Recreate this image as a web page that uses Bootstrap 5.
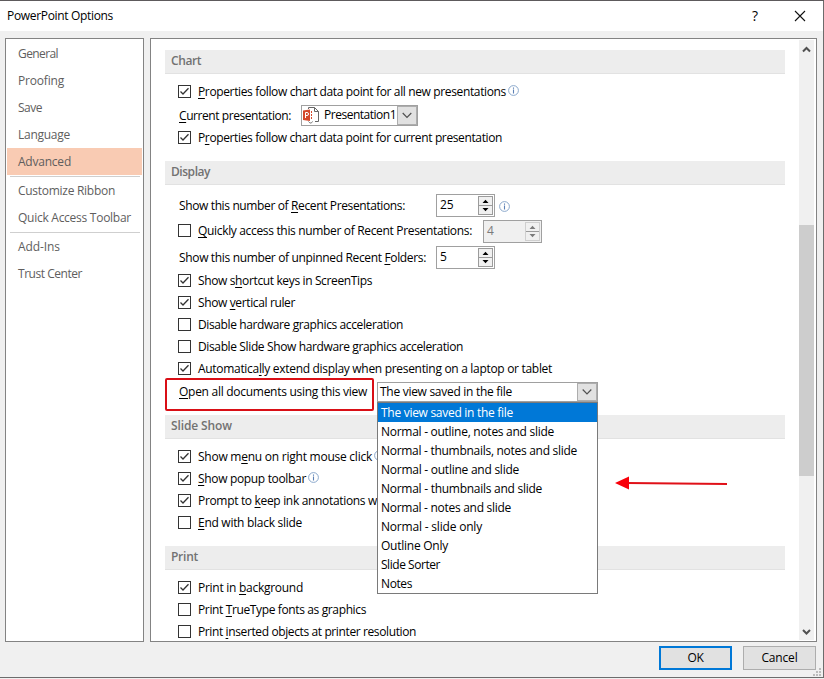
<!DOCTYPE html>
<html lang="en">
<head>
<meta charset="utf-8">
<meta name="viewport" content="width=device-width, initial-scale=1">
<title>PowerPoint Options</title>
<link href="https://cdn.jsdelivr.net/npm/bootstrap@5.3.0/dist/css/bootstrap.min.css" rel="stylesheet">
<style>
body{font:12px/18px "Open Sans","Noto Sans",sans-serif;color:#000;background:#f0f0f0;overflow:hidden}
.dialog{width:824px;height:679px;border-top:1px solid #5d5a5c;background:#f0f0f0}
.dialog-inner{height:677px;border-right:1px solid #6c6c6c;border-bottom:1px solid #6c6c6c}
.titlebar{height:30px;background:#fff;padding:0 17px 0 7px}
.help{font-size:14px;margin-right:35px;position:relative;left:-1px}
.panes{padding:7px 6px 0 5px;gap:6px}
.side{width:139px;height:604px;border:1px solid #838383;background:#fff;padding:1px}
.side a{height:27px;padding:5px 0 0 11px;color:#605e5e;text-decoration:none;display:block;white-space:nowrap}
.side a.current{background:#f9cbb3}
.side .rule{height:1px;margin:1px 2px 0 3px;background:#cfcfcf}
.main{width:667px;height:604px;border:1px solid #838383;background:#fff;overflow:hidden;padding:1px 2px 1px 14px}
.opts{width:620px;padding-top:10px}
.sect{height:24px;background:#ededed;border-bottom:1px solid #e2e2e2;color:#727272;font-weight:600;padding:2px 0 0 6px}
.sect.gap-top{margin-top:12px}
.line{height:22px;padding-left:13px;white-space:nowrap}
.line.first{margin-top:7px}
.line.short{height:21px}
.line.pick{height:25px}
.line.num{height:26px}
.line.num.lead-in{margin-top:9px}
.line.num.end{height:24px}
.line.view{height:35px}
.box{width:13px;height:13px;border:1px solid #333;background:#fff;margin:4px 7px 0 0;flex:none}
.box svg{display:block}
.line .txt{margin-top:2px;flex:none}
.line .bare{margin:3px 0 0 1px}
.pick .bare{margin-top:5px}
u{text-underline-offset:2px;text-decoration-thickness:1px}
.info{width:11px;height:11px;margin:4px 0 0 2px;flex:none}
.num .info{margin:7px 0 0 4px}
.spin{width:59px;height:23px;border:1px solid #a0a0a0;background:#fff;padding:1px 1px 1px 3px;line-height:17px;flex:none}
.spin.m31{margin-left:31px}
.spin.m11{margin-left:11px}
.spin.m10{margin-left:10px}
.spin.off{background:#f0f0f0;color:#7b7b7b}
.spin .ar{width:15px;height:19px;border:1px solid #9b9b9b;background:#f0f0f0}
.spin.off .ar{border-color:#cfcfcf}
.combo{border:1px solid #a0a0a0;background:#fff;height:20px;width:221px;margin-top:2px;padding-left:2px;flex:none}
.combo.pres{width:117px;height:21px;margin:3px 0 0 10px;padding-left:0}
.combo.pres .nm{margin-left:3px}
.drop{width:20px;border:1px solid #adadad;background:#e1e1e1;flex:none}
.drop svg{display:block}
.view-wrap{height:33px;width:209px;border:2px solid #d90f16;border-radius:2px;margin:-2px 3px 0 -13px;padding:3px 0 0 12px}
.views{position:absolute;left:0;top:20px;width:221px;border:1px solid #7a7a7a;background:#fff;z-index:3;margin:-1px 0 0 -1px}
.views div{height:19px;padding-left:3px;line-height:20px}
.views .on{background:#0078d7;color:#fff}
.sbar{width:15px;height:600px;background:#f0f0f0}
.thumb{height:251px;background:#cdcdcd}
.arrow{position:absolute;left:615px;top:475px;z-index:4}
.foot{padding:4px 7px 0 0;gap:11px}
.pb{width:73px;height:24px;border:1px solid #adadad;border-radius:0;background:#e1e1e1;font-size:12px;line-height:20px;padding:0;color:#000}
.pb.def{border:2px solid #0078d7;line-height:18px}
.grip{position:absolute;left:813px;top:667px}
[data-w]{white-space:nowrap}
</style>
<script src="https://cdn.jsdelivr.net/npm/bootstrap@5.3.0/dist/js/bootstrap.bundle.min.js"></script>
</head>
<body>
<svg width="0" height="0" class="position-absolute">
<symbol id="chk" viewBox="0 0 11 11"><path d="M1.500 5.500 4 8 9.500 2.300" fill="none" stroke="#333" stroke-width="1.300"/></symbol>
<symbol id="inf" viewBox="0 0 11 11"><circle cx="5.500" cy="5.500" r="4.900" fill="#fff" stroke="#7f9fc6" stroke-width=".9"/><path d="M5.500 2.400v1.300M5.500 4.600v4" stroke="#5b80b5" stroke-width="1.100"/></symbol>
<symbol id="ud" viewBox="0 0 13 17"><path d="M0 8.500h13" stroke="#9b9b9b"/><path d="M3.500 6 6.500 2.700 9.500 6zM3.500 11 6.500 14.300 9.500 11z" fill="currentColor"/></symbol>
<symbol id="dn" viewBox="0 0 18 16"><path d="M4.700 5.500 9 9.800 13.300 5.500" fill="none" stroke="#505050" stroke-width="1.200"/></symbol>
</svg>
<div class="dialog position-relative">
<div class="dialog-inner">
<header class="titlebar d-flex align-items-center">
<span data-w="106">PowerPoint Options</span>
<span class="help ms-auto">?</span>
<svg width="12" height="12"><path d="M1 1 11 11M11 1 1 11" stroke="#111" stroke-width="1.100"/></svg>
</header>
<div class="panes d-flex">
<nav class="side">
<a href="#"><span data-w="40">General</span></a>
<a href="#"><span data-w="46">Proofing</span></a>
<a href="#"><span data-w="24">Save</span></a>
<a href="#"><span data-w="52">Language</span></a>
<a href="#" class="current"><span data-w="53">Advanced</span></a>
<div class="rule"></div>
<a href="#"><span data-w="97">Customize Ribbon</span></a>
<a href="#"><span data-w="113">Quick Access Toolbar</span></a>
<div class="rule"></div>
<a href="#"><span data-w="42">Add-Ins</span></a>
<a href="#"><span data-w="64">Trust Center</span></a>
</nav>
<main class="main d-flex justify-content-between">
<div class="opts">
<div class="sect"><span data-w="30">Chart</span></div>
<div class="line first short d-flex"><span class="box"><svg width="11" height="11"><use href="#chk"/></svg></span><span class="txt" data-w="308"><u>P</u>roperties follow chart data point for all new presentations</span><svg class="info"><use href="#inf"/></svg></div>
<div class="line pick d-flex"><span class="txt bare" data-w="112"><u>C</u>urrent presentation:</span>
<div class="combo pres d-flex">
<svg width="19" height="19" class="flex-shrink-0"><path d="M6.500 3V1.500H12.500L16.500 5.500V15.500H13M12.500 1.500V5.500H16.500M6.500 15.500C8 17.500 9.500 17.500 10.500 15.500" fill="none" stroke="#666"/><path d="M9.500 5v8.500" stroke="#d4482c" stroke-dasharray="2 1"/><path d="M1 4.500 8 3.500V15L1 14z" fill="#d4482c"/><path d="M3.500 12V6.500H5a1.500 1.500 0 0 1 0 3H3.500" fill="none" stroke="#fff"/></svg>
<span class="nm" data-w="72">Presentation1</span><span class="drop ms-auto"><svg width="18" height="17"><use href="#dn"/></svg></span></div></div>
<div class="line d-flex"><span class="box"><svg width="11" height="11"><use href="#chk"/></svg></span><span class="txt" data-w="304">P<u>r</u>operties follow chart data point for current presentation</span></div>
<div class="sect gap-top"><span data-w="39">Display</span></div>
<div class="line num lead-in d-flex"><span class="txt bare" data-w="226">Show this number of <u>R</u>ecent Presentations:</span><div class="spin m31 d-flex justify-content-between">25<span class="ar"><svg class="d-block" width="13" height="17"><use href="#ud"/></svg></span></div><svg class="info"><use href="#inf"/></svg></div>
<div class="line num d-flex"><span class="box"></span><span class="txt" data-w="274"><u>Q</u>uickly access this number of Recent Presentations:</span><div class="spin off m11 d-flex justify-content-between">4<span class="ar"><svg class="d-block" width="13" height="17"><use href="#ud"/></svg></span></div></div>
<div class="line num end d-flex"><span class="txt bare" data-w="247">Show this number of unpinned Recent <u>F</u>olders:</span><div class="spin m10 d-flex justify-content-between">5<span class="ar"><svg class="d-block" width="13" height="17"><use href="#ud"/></svg></span></div></div>
<div class="line d-flex"><span class="box"><svg width="11" height="11"><use href="#chk"/></svg></span><span class="txt" data-w="174">Show s<u>h</u>ortcut keys in ScreenTips</span></div>
<div class="line d-flex"><span class="box"><svg width="11" height="11"><use href="#chk"/></svg></span><span class="txt" data-w="97">Show <u>v</u>ertical ruler</span></div>
<div class="line d-flex"><span class="box"></span><span class="txt" data-w="205">Disable hardware <u>g</u>raphics acceleration</span></div>
<div class="line d-flex"><span class="box"></span><span class="txt" data-w="265">Disable Slide Show hardware <u>g</u>raphics acceleration</span></div>
<div class="line d-flex"><span class="box"><svg width="11" height="11"><use href="#chk"/></svg></span><span class="txt" data-w="354">Automatica<u>l</u>ly extend display when presenting on a laptop or tablet</span></div>
<div class="line view d-flex"><div class="view-wrap flex-shrink-0"><span data-w="188"><u>O</u>pen all documents using this view</span></div>
<div class="combo d-flex position-relative"><span data-w="132">The view saved in the file</span><span class="drop ms-auto"><svg width="18" height="16"><use href="#dn"/></svg></span>
<div class="views">
<div class="on"><span data-w="132">The view saved in the file</span></div>
<div><span data-w="173">Normal - outline, notes and slide</span></div>
<div><span data-w="196">Normal - thumbnails, notes and slide</span></div>
<div><span data-w="138">Normal - outline and slide</span></div>
<div><span data-w="161">Normal - thumbnails and slide</span></div>
<div><span data-w="130">Normal - notes and slide</span></div>
<div><span data-w="101">Normal - slide only</span></div>
<div><span data-w="67">Outline Only</span></div>
<div><span data-w="59">Slide Sorter</span></div>
<div><span data-w="31">Notes</span></div>
</div></div></div>
<div class="sect"><span data-w="61">Slide Show</span></div>
<div class="line first d-flex"><span class="box"><svg width="11" height="11"><use href="#chk"/></svg></span><span class="txt" data-w="174">Show m<u>e</u>nu on right mouse click</span><svg class="info"><use href="#inf"/></svg></div>
<div class="line d-flex"><span class="box"><svg width="11" height="11"><use href="#chk"/></svg></span><span class="txt" data-w="108"><u>S</u>how popup toolbar</span><svg class="info"><use href="#inf"/></svg></div>
<div class="line d-flex"><span class="box"><svg width="11" height="11"><use href="#chk"/></svg></span><span class="txt" data-w="179">Prompt to <u>k</u>eep ink annotations w</span></div>
<div class="line d-flex"><span class="box"></span><span class="txt" data-w="104"><u>E</u>nd with black slide</span></div>
<div class="sect gap-top"><span data-w="27">Print</span></div>
<div class="line first d-flex"><span class="box"><svg width="11" height="11"><use href="#chk"/></svg></span><span class="txt" data-w="105">Print in <u>b</u>ackground</span></div>
<div class="line d-flex"><span class="box"></span><span class="txt" data-w="168">Print <u>T</u>rueType fonts as graphics</span></div>
<div class="line d-flex"><span class="box"></span><span class="txt" data-w="218">Print <u>i</u>nserted objects at printer resolution</span></div>
</div>
<div class="sbar d-flex flex-column justify-content-between">
<svg width="15" height="185" class="d-block"><path d="M4 11.500 7.500 8 11 11.500" fill="none" stroke="#505050" stroke-width="2"/></svg>
<div class="thumb"></div>
<svg width="15" height="164" class="d-block"><path d="M4 154 7.500 157.500 11 154" fill="none" stroke="#505050" stroke-width="2"/></svg>
</div>
</main>
</div>
<footer class="foot d-flex justify-content-end">
<button class="btn pb def"><span data-w="16">OK</span></button>
<button class="btn pb"><span data-w="36">Cancel</span></button>
</footer>
</div>
<svg class="arrow" width="114" height="16"><path d="M12 7 112 8" stroke="#e01018" stroke-width="2"/><path d="M0 7 14 .5V13.500z" fill="#f8000a"/></svg>
<svg class="grip" width="9" height="9" fill="#bcbcbc"><path d="M6 0h2v2H6zM3 3h2v2H3zM6 3h2v2H6zM0 6h2v2H0zM3 6h2v2H3zM6 6h2v2H6z"/></svg>
</div>
<script>
document.querySelectorAll('[data-w]').forEach(function (el) {
  var r = document.createRange();
  r.selectNodeContents(el);
  var n = el.textContent.length;
  el.style.letterSpacing = ((el.dataset.w - r.getBoundingClientRect().width) / n).toFixed(3) + 'px';
});
</script>
</body>
</html>
